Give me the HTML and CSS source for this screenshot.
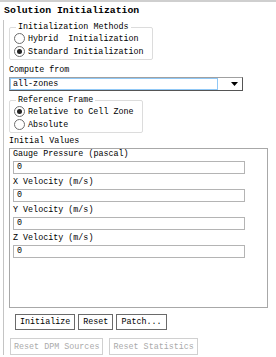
FILE: index.html
```html
<!DOCTYPE html>
<html lang="en">
<head>
  <meta charset="UTF-8" />
  <title>Solution Initialization</title>
  <link rel="stylesheet" href="styles.css">
</head>
<body>

<div class="panel">
  <div class="title">Solution Initialization</div>

  <div class="body">
    <!-- Initialization Methods -->
    <fieldset class="group methods">
      <legend>Initialization Methods</legend>
      <label class="radio"><span class="dot"></span>Hybrid  Initialization</label>
      <label class="radio"><span class="dot checked"></span>Standard Initialization</label>
    </fieldset>

    <div class="label compute">Compute from</div>
    <div class="combo">
      <div class="combo-field">all-zones</div>
      <div class="combo-btn">
        <svg width="7" height="4" viewBox="0 0 7 4"><path d="M0 0h7L3.5 4z" fill="#000"/></svg>
      </div>
    </div>

    <!-- Reference Frame -->
    <fieldset class="group frame">
      <legend>Reference Frame</legend>
      <label class="radio"><span class="dot checked"></span>Relative to Cell Zone</label>
      <label class="radio"><span class="dot"></span>Absolute</label>
    </fieldset>

    <div class="label initial">Initial Values</div>
    <div class="values">
      <div class="field-label">Gauge Pressure (pascal)</div>
      <div class="input">0</div>
      <div class="field-label">X Velocity (m/s)</div>
      <div class="input">0</div>
      <div class="field-label">Y Velocity (m/s)</div>
      <div class="input">0</div>
      <div class="field-label">Z Velocity (m/s)</div>
      <div class="input">0</div>
    </div>

    <div class="btn-row main">
      <button class="btn">Initialize</button>
      <button class="btn">Reset</button>
      <button class="btn">Patch...</button>
    </div>
    <div class="btn-row extra">
      <button class="btn off">Reset DPM Sources</button>
      <button class="btn off">Reset Statistics</button>
    </div>
  </div>
</div>

</body>
</html>
```

FILE: styles.css
```css
body {
  margin: 0;
  background: #fff;
  font-family: "Liberation Mono", "DejaVu Sans Mono", monospace;
  font-size: 8.4px;
  color: #000;
}

.panel {
  border-top: 2px solid #cfcfcf;
  height: 355px;
  overflow: hidden;
}

.title {
  font-weight: bold;
  font-size: 9.8px;
  padding: 3px 0 0 4px;
  height: 15px;
}

.body {
  margin-left: 3px;
  border-left: 1px solid #c4c4c4;
  padding-left: 5px;
  padding-top: 3px;
}

.group {
  margin: 0;
  padding: 0 8px 1px 4px;
  border: 1px solid #dcdcdc;
  border-radius: 2px;
}

.group legend {
  padding: 0 2px;
  margin-left: 2px;
  line-height: 9px;
}

.methods {
  width: 122px;
}

.frame {
  width: 117px;
  margin-top: 5px;
}

.radio {
  display: flex;
  align-items: center;
  height: 13px;
  white-space: pre;
}

.dot {
  width: 9px;
  height: 9px;
  border: 1px solid #6e6e6e;
  border-radius: 50%;
  margin-right: 3px;
  box-sizing: content-box;
  background: #fff;
  position: relative;
}

.dot.checked::after {
  content: "";
  position: absolute;
  left: 2px;
  top: 2px;
  width: 5px;
  height: 5px;
  border-radius: 50%;
  background: #222;
}

.label {
  height: 9px;
  line-height: 9px;
}

.label.compute {
  margin-top: 6px;
}

.label.initial {
  margin-top: 4px;
}

.combo {
  display: flex;
  width: 234px;
  height: 14px;
  margin-top: 2px;
  border: 1px solid #a0a0a0;
  border-right-color: #555;
  border-bottom-color: #555;
  box-sizing: border-box;
}

.combo-field {
  flex: 1;
  border: 1px solid #90c8f6;
  line-height: 10px;
  padding-left: 2px;
}

.combo-btn {
  width: 24px;
  display: flex;
  align-items: center;
  justify-content: flex-end;
  padding-right: 4px;
  box-sizing: border-box;
}

.values {
  width: 259px;
  height: 160px;
  margin-top: 2px;
  border: 1px solid #a8a8a8;
  box-sizing: border-box;
  padding: 1px 0 0 3px;
}

.field-label {
  height: 9px;
  line-height: 9px;
  margin-top: 4px;
}

.field-label:first-child {
  margin-top: 0;
}

.input {
  width: 232px;
  height: 13px;
  margin-top: 2px;
  border: 1px solid #b4b4b4;
  box-sizing: border-box;
  line-height: 11px;
  padding-left: 3px;
}

.btn-row {
  display: flex;
  gap: 3px;
}

.btn-row.main {
  margin-top: 6px;
  padding-left: 6px;
}

.btn-row.extra {
  margin-top: 8px;
  padding-left: 1px;
  gap: 6px;
}

.btn {
  font: inherit;
  background: #fff;
  color: #000;
  border: 1px solid #6a6a6a;
  height: 16px;
  padding: 0 4px;
  margin: 0;
}

.btn.off {
  color: #aaa;
  border-color: #d0d0d0;
  height: 17px;
  padding: 0 3px;
}
```
